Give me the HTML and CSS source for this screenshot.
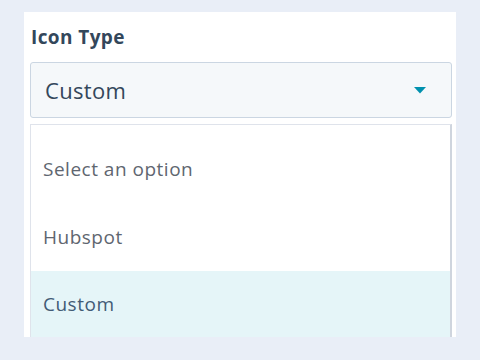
FILE: index.html
```html
<!DOCTYPE html>
<html>
<head>
    <link rel="stylesheet" href="styles.css">
</head>
<body>

    <div class="panel">
        <label class="field-label">Icon Type</label>
        <div class="select-box">
            <span class="select-value">Custom</span>
            <svg class="caret" width="12" height="7" viewBox="0 0 12 7">
                <path d="M0 0 H12 L6 6.5 Z" fill="#0091ae"/>
            </svg>
        </div>
        <ul class="options">
            <li class="option">Select an option</li>
            <li class="option">Hubspot</li>
            <li class="option selected">Custom</li>
        </ul>
    </div>
    <div class="footer-strip"></div>

</body>
</html>
```

FILE: styles.css
```css
body {
    margin: 0;
    height: 360px;
    overflow: hidden;
    background-color: #e9eef7;
    font-family: 'Open Sans', 'Noto Sans', sans-serif;
    color: #33475b;
    display: flex;
    flex-direction: column;
}
.panel {
    margin: 12px 24px 0 24px;
    padding: 15px 4px 0 6px;
    background-color: #ffffff;
    display: flex;
    flex-direction: column;
    height: 310px;
}
.field-label {
    font-size: 19px;
    font-weight: bold;
    letter-spacing: 0.4px;
    margin-left: 1px;
    height: 20px;
    line-height: 20px;
}
.select-box {
    margin-top: 15px;
    box-sizing: border-box;
    height: 56px;
    background-color: #f5f8fa;
    border: 1px solid #cbd6e2;
    border-radius: 3px;
    display: flex;
    align-items: center;
    justify-content: space-between;
    padding: 0 25px 0 14px;
}
.select-value {
    font-size: 22px;
    letter-spacing: 0.3px;
}
.caret {
    display: block;
}
.options {
    list-style: none;
    margin: 6px 0 0 0;
    padding: 10px 0 0 0;
    border: 1px solid #dfe3eb;
    border-bottom: none;
    border-right: 2px solid #cfd5de;
    flex: 1;
    display: flex;
    flex-direction: column;
}
.option {
    height: 68px;
    display: flex;
    align-items: center;
    padding-left: 12px;
    font-size: 19px;
    letter-spacing: 0.5px;
    color: #5f6670;
}
.option.selected {
    background-color: #e5f5f8;
    color: #425b76;
    flex: 1;
}
.footer-strip {
    height: 10px;
}
```
